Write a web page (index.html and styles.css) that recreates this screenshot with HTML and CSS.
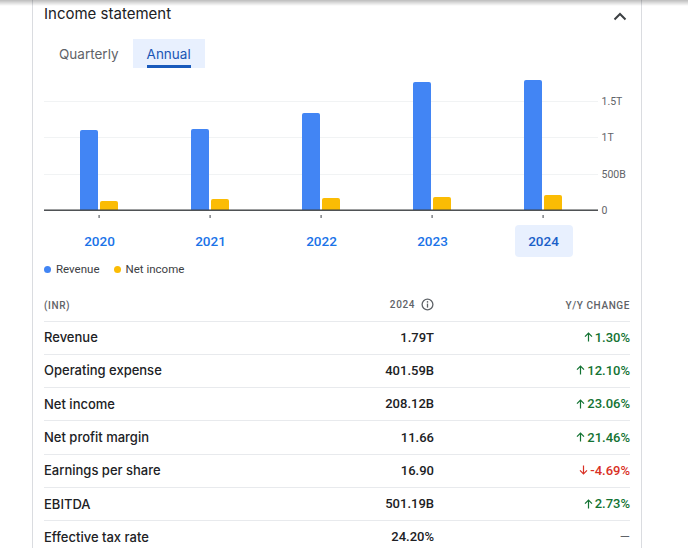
FILE: index.html
```html
<!DOCTYPE html>
<html>
<head>
<meta charset="utf-8">
<link rel="stylesheet" href="styles.css">
</head>
<body>
<div class="topshadow"></div>
<div class="card">
  <div class="head">
    <div class="title">Income statement</div>
    <svg class="chev" width="20" height="20" viewBox="0 0 20 20"><path d="M4.5 15.5 L10 10 L15.5 15.5" fill="none" stroke="#3c4043" stroke-width="2"/></svg>
  </div>
  <div class="tabs">
    <div class="tab">Quarterly</div>
    <div class="tab active"><span class="tabtext">Annual</span></div>
  </div>
  <svg class="chart" width="586" height="142" viewBox="0 0 586 142">
    <rect x="0" y="21" width="554" height="1" fill="#f1f3f4"/>
    <rect x="0" y="57" width="554" height="1" fill="#f1f3f4"/>
    <rect x="0" y="94" width="554" height="1" fill="#f1f3f4"/>
    <path d="M36 130 V52 Q36 50 38 50 H52 Q54 50 54 52 V130 Z" fill="#4285f4"/>
    <path d="M56 130 V123 Q56 121 58 121 H72 Q74 121 74 123 V130 Z" fill="#fbbc04"/>
    <path d="M147 130 V51 Q147 49 149 49 H163 Q165 49 165 51 V130 Z" fill="#4285f4"/>
    <path d="M167 130 V121 Q167 119 169 119 H183 Q185 119 185 121 V130 Z" fill="#fbbc04"/>
    <path d="M258 130 V35 Q258 33 260 33 H274 Q276 33 276 35 V130 Z" fill="#4285f4"/>
    <path d="M278 130 V120 Q278 118 280 118 H294 Q296 118 296 120 V130 Z" fill="#fbbc04"/>
    <path d="M369 130 V4 Q369 2 371 2 H385 Q387 2 387 4 V130 Z" fill="#4285f4"/>
    <path d="M389 130 V119 Q389 117 391 117 H405 Q407 117 407 119 V130 Z" fill="#fbbc04"/>
    <path d="M480 130 V2 Q480 0 482 0 H496 Q498 0 498 2 V130 Z" fill="#4285f4"/>
    <path d="M500 130 V117 Q500 115 502 115 H516 Q518 115 518 117 V130 Z" fill="#fbbc04"/>
    <rect x="0" y="129.5" width="554" height="1.4" fill="#3c4043"/>
    <rect x="54.5" y="135" width="1.2" height="3" fill="#5f6368"/>
    <rect x="165.5" y="135" width="1.2" height="3" fill="#5f6368"/>
    <rect x="276.5" y="135" width="1.2" height="3" fill="#5f6368"/>
    <rect x="387.5" y="135" width="1.2" height="3" fill="#5f6368"/>
    <rect x="498.5" y="135" width="1.2" height="3" fill="#5f6368"/>
    <text class="axis" x="557.5" y="21.5" dy="0.36em">1.5T</text>
    <text class="axis" x="557.5" y="57.5" dy="0.36em">1T</text>
    <text class="axis" x="557.5" y="94.5" dy="0.36em">500B</text>
    <text class="axis" x="557.5" y="130.5" dy="0.36em">0</text>
  </svg>
  <div class="years">
    <div class="year"><span class="ybox">2020</span></div>
    <div class="year"><span class="ybox">2021</span></div>
    <div class="year"><span class="ybox">2022</span></div>
    <div class="year"><span class="ybox">2023</span></div>
    <div class="year"><span class="ybox sel">2024</span></div>
  </div>
  <div class="legend">
    <span class="litem"><span class="dot blue"></span>Revenue</span>
    <span class="litem"><span class="dot yellow"></span>Net income</span>
  </div>
  <div class="table">
    <div class="row hdr">
      <div>(INR)</div>
      <div class="val hval">2024 <svg width="13" height="13" viewBox="0 0 13 13"><circle cx="6.5" cy="6.5" r="5.4" fill="none" stroke="#5f6368" stroke-width="1.3"/><rect x="5.85" y="5.6" width="1.3" height="4" fill="#5f6368"/><circle cx="6.5" cy="3.9" r="0.8" fill="#5f6368"/></svg></div>
      <div class="hchg">Y/Y CHANGE</div>
    </div>
    <div class="row">
      <div class="lbl">Revenue</div><div class="val">1.79T</div>
      <div class="chg up"><svg class="arr" width="9" height="10" viewBox="0 0 9 10"><path d="M4.5 9.5 V1.2 M1 4.6 L4.5 1.1 L8 4.6" fill="none" stroke="currentColor" stroke-width="1.2"/></svg>1.30%</div>
    </div>
    <div class="row">
      <div class="lbl">Operating expense</div><div class="val">401.59B</div>
      <div class="chg up"><svg class="arr" width="9" height="10" viewBox="0 0 9 10"><path d="M4.5 9.5 V1.2 M1 4.6 L4.5 1.1 L8 4.6" fill="none" stroke="currentColor" stroke-width="1.2"/></svg>12.10%</div>
    </div>
    <div class="row">
      <div class="lbl">Net income</div><div class="val">208.12B</div>
      <div class="chg up"><svg class="arr" width="9" height="10" viewBox="0 0 9 10"><path d="M4.5 9.5 V1.2 M1 4.6 L4.5 1.1 L8 4.6" fill="none" stroke="currentColor" stroke-width="1.2"/></svg>23.06%</div>
    </div>
    <div class="row">
      <div class="lbl">Net profit margin</div><div class="val">11.66</div>
      <div class="chg up"><svg class="arr" width="9" height="10" viewBox="0 0 9 10"><path d="M4.5 9.5 V1.2 M1 4.6 L4.5 1.1 L8 4.6" fill="none" stroke="currentColor" stroke-width="1.2"/></svg>21.46%</div>
    </div>
    <div class="row">
      <div class="lbl">Earnings per share</div><div class="val">16.90</div>
      <div class="chg down"><svg class="arr" width="9" height="10" viewBox="0 0 9 10"><path d="M4.5 0.5 V8.8 M1 5.4 L4.5 8.9 L8 5.4" fill="none" stroke="currentColor" stroke-width="1.2"/></svg>-4.69%</div>
    </div>
    <div class="row">
      <div class="lbl">EBITDA</div><div class="val">501.19B</div>
      <div class="chg up"><svg class="arr" width="9" height="10" viewBox="0 0 9 10"><path d="M4.5 9.5 V1.2 M1 4.6 L4.5 1.1 L8 4.6" fill="none" stroke="currentColor" stroke-width="1.2"/></svg>2.73%</div>
    </div>
    <div class="row">
      <div class="lbl">Effective tax rate</div><div class="val">24.20%</div>
      <div class="chg none">—</div>
    </div>
  </div>
</div>
</body>
</html>
```

FILE: styles.css
```css
html, body {
  margin: 0;
  padding: 0;
  background: #fff;
  overflow: hidden;
}
body {
  font-family: Inter, "Liberation Sans", sans-serif;
  color: #202124;
}
.topshadow {
  position: fixed;
  left: 0;
  top: 0;
  width: 100%;
  height: 6px;
  background: linear-gradient(to bottom, rgba(0,0,0,0.26), rgba(0,0,0,0));
  z-index: 5;
}
.card {
  box-sizing: border-box;
  width: 610px;
  margin-left: 32px;
  border-left: 1px solid #dadce0;
  border-right: 1px solid #dadce0;
  padding: 0 11px;
  min-height: 600px;
}
.head {
  height: 27px;
  display: flex;
  align-items: center;
  justify-content: space-between;
}
.title {
  font-size: 15px;
  line-height: 27px;
  font-weight: 400;
  color: #202124;
}
.chev {
  display: block;
}
.tabs {
  display: flex;
  margin-top: 12px;
  height: 29px;
}
.tab {
  padding: 0 14px 0 15px;
  font-size: 13.5px;
  color: #5f6368;
  display: flex;
  align-items: center;
}
.tab.active {
  padding: 0 14px;
  background: #e8f0fe;
  color: #1a56b5;
  align-items: stretch;
}
.tabtext {
  display: flex;
  align-items: center;
  padding-top: 3px;
  border-bottom: 3px solid #185abc;
  box-sizing: border-box;
}
.chart {
  display: block;
  margin-top: 12px;
}
.axis {
  font-family: Roboto, sans-serif;
  font-size: 10.5px;
  fill: #5f6368;
}
.years {
  display: grid;
  grid-template-columns: repeat(5, 111px);
  margin-top: 3px;
}
.year {
  display: flex;
  justify-content: center;
}
.ybox {
  width: 58px;
  height: 32px;
  border-radius: 4px;
  display: flex;
  align-items: center;
  justify-content: center;
  font-family: Roboto, sans-serif;
  font-weight: 500;
  font-size: 13.5px;
  color: #1a73e8;
}
.ybox.sel {
  background: #e8f0fe;
  color: #1a5fc8;
}
.legend {
  display: flex;
  gap: 14px;
  margin-top: 4px;
  height: 16px;
  align-items: center;
  font-family: Roboto, sans-serif;
  font-size: 11.5px;
  color: #3c4043;
}
.litem {
  display: flex;
  align-items: center;
  gap: 5px;
}
.dot {
  width: 7px;
  height: 7px;
  border-radius: 50%;
}
.dot.blue { background: #4285f4; }
.dot.yellow { background: #fbbc04; }
.table {
  margin-top: 13px;
}
.row {
  display: grid;
  grid-template-columns: 1fr auto 196px;
  align-items: center;
  height: 33.3px;
  box-sizing: border-box;
  border-top: 1px solid #e8eaed;
}
.row.hdr {
  height: 30.5px;
  border-top: none;
  font-family: Roboto, sans-serif;
  font-size: 10px;
  font-weight: 500;
  letter-spacing: 0.6px;
  color: #5f6368;
}
.lbl {
  font-size: 13px;
  font-weight: 500;
  color: #202124;
  padding-bottom: 1px;
}
.val {
  text-align: right;
  font-family: Roboto, sans-serif;
  font-size: 13px;
  font-weight: 500;
  color: #202124;
  padding-bottom: 1px;
}
.row.hdr .val {
  font-size: 10px;
  color: #5f6368;
}
.hval {
  display: flex;
  align-items: center;
  gap: 6px;
}
.hval svg { display: block; }
.hchg {
  text-align: right;
}
.chg {
  display: flex;
  justify-content: flex-end;
  align-items: center;
  gap: 2px;
  font-family: Roboto, sans-serif;
  font-size: 13px;
  font-weight: 500;
  padding-bottom: 1px;
}
.chg.up { color: #137333; }
.chg.down { color: #d93025; }
.chg.none { color: #5f6368; font-weight: 400; }
.arr { display: block; }
```
